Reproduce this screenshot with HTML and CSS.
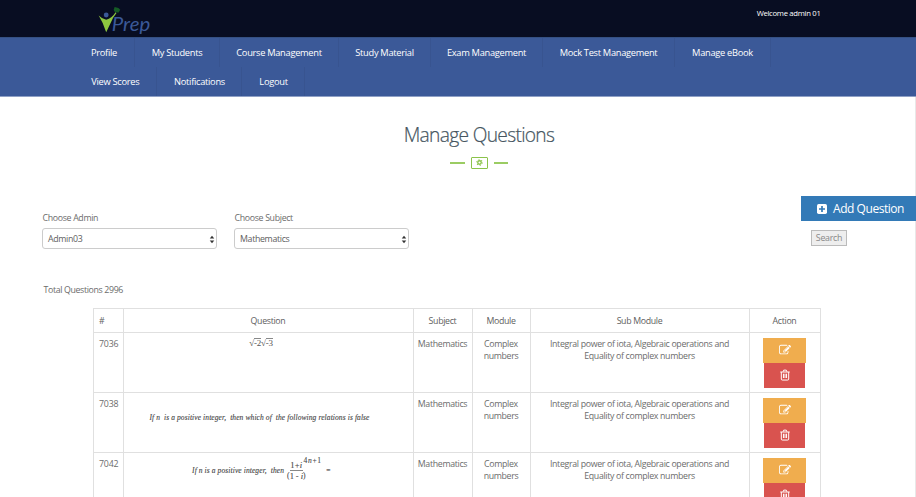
FILE: index.html
```html
<!DOCTYPE html>
<html lang="en">
<head>
<meta charset="utf-8">
<title>Manage Questions</title>
<link rel="stylesheet" href="styles.css">
</head>
<body>
<svg class="sprite" aria-hidden="true">
  <symbol id="edit" viewBox="0 0 1792 1792"><path d="M888 1184l116-116-152-152-116 116v56h96v96h56zm440-720q-16-16-33 1l-350 350q-17 17-1 33t33-1l350-350q17-17 1-33zm80 594v190q0 119-84.500 203.500t-203.500 84.500h-832q-119 0-203.500-84.500t-84.500-203.500v-832q0-119 84.500-203.500t203.500-84.500h832q63 0 117 25 15 7 18 23 3 17-9 29l-49 49q-14 14-32 8-23-6-45-6h-832q-66 0-113 47t-47 113v832q0 66 47 113t113 47h832q66 0 113-47t47-113v-126q0-13 9-22l64-64q15-15 35-7t20 29zm-96-738l288 288-672 672h-288v-288zm444 132l-92 92-288-288 92-92q28-28 68-28t68 28l152 152q28 28 28 68t-28 68z"/></symbol>
  <symbol id="trash" viewBox="0 0 14 14"><path d="M1.500 3.500h11M4.800 3.200l.7-1.900h3l.7 1.900M2.700 3.500v8.200q0 1.200 1.200 1.200h6.200q1.200 0 1.200-1.200V3.500M5.200 5.500v5M7 5.500v5M8.800 5.500v5" fill="none" stroke="currentColor" stroke-width="1.150"/></symbol>
</svg>
<header class="top">
  <svg class="logo" viewBox="0 0 54 32" role="img" aria-label="Prep">
    <path d="M0 9q4 4 8 4.500 6-1.500 10-8l1 1q-4 5-6 10L8 27Q5 17 0 9z" fill="#8dc63f"/>
    <circle cx="8" cy="8.500" r="2.600" fill="#3b5998"/>
    <path d="M16 3l1-3 4 1 2 2-2 3-4-1z" fill="#155b25"/>
    <text x="14" y="26" textLength="41" lengthAdjust="spacingAndGlyphs" class="logo-text">Prep</text>
  </svg>
  <span class="welcome">Welcome admin 01</span>
</header>
<nav class="nav">
  <div class="nav-row"><a class="w-a">Profile</a><a class="w-b">My Students</a><a class="w-c">Course Management</a><a class="w-d">Study Material</a><a class="w-e">Exam Management</a><a class="w-f">Mock Test Management</a><a class="w-g">Manage eBook</a></div>
  <div class="nav-row"><a class="w-h">View Scores</a><a class="w-b">Notifications</a><a class="w-i">Logout</a></div>
</nav>
<main class="main">
  <h1>Manage Questions</h1>
  <div class="divider"><i></i><b><svg viewBox="0 0 8 8"><circle cx="4" cy="4" r="2" fill="none" stroke="#8bc34a" stroke-width="1.500"/><circle cx="4" cy="4" r="3.100" fill="none" stroke="#8bc34a" stroke-width="1.300" stroke-dasharray="1.300 1.950"/></svg></b><i></i></div>
  <section class="controls">
    <div class="field"><label>Choose Admin</label><div class="select">Admin03<svg viewBox="0 0 6 10"><path d="M.5 4L3 .7 5.500 4zM.5 6L3 9.300 5.500 6z"/></svg></div></div>
    <div class="field"><label>Choose Subject</label><div class="select">Mathematics<svg viewBox="0 0 6 10"><path d="M.5 4L3 .7 5.500 4zM.5 6L3 9.300 5.500 6z"/></svg></div></div>
    <div class="actions">
      <a class="add"><svg viewBox="0 0 10 10"><rect width="10" height="10" rx="1.700" fill="#fff"/><path d="M5 2v6M2 5h6" stroke="#337ab7" stroke-width="1.700"/></svg><span>Add Question</span></a>
      <button class="search">Search</button>
    </div>
  </section>
  <p class="total">Total Questions 2996</p>
  <table class="table">
    <colgroup><col class="c-id"><col class="c-question"><col class="c-subject"><col class="c-module"><col class="c-sub"><col class="c-action"></colgroup>
    <thead><tr><th class="left">#</th><th>Question</th><th>Subject</th><th>Module</th><th>Sub Module</th><th>Action</th></tr></thead>
    <tbody>
      <tr><td class="left">7036</td><td><div class="root">√<span>-2</span>√<span>-3</span></div></td><td>Mathematics</td><td>Complex<br>numbers</td><td>Integral power of iota, Algebraic operations and<br>Equality of complex numbers</td><td class="act"><a class="btn edit"><svg><use href="#edit"/></svg></a><a class="btn del"><svg><use href="#trash"/></svg></a></td></tr>
      <tr><td class="left">7038</td><td><div class="math relation">If n  is a positive integer,  then which of  the following relations is false</div></td><td>Mathematics</td><td>Complex<br>numbers</td><td>Integral power of iota, Algebraic operations and<br>Equality of complex numbers</td><td class="act"><a class="btn edit"><svg><use href="#edit"/></svg></a><a class="btn del"><svg><use href="#trash"/></svg></a></td></tr>
      <tr><td class="left">7042</td><td><div class="math power"><span class="lead">If n is a positive integer,  then</span><span class="paren">(</span><span class="frac"><span>1+<em>i</em></span><span>1 - <em>i</em></span></span><span class="paren">)</span><span class="exp">4<em>n</em>+1</span><span class="eq">=</span></div></td><td>Mathematics</td><td>Complex<br>numbers</td><td>Integral power of iota, Algebraic operations and<br>Equality of complex numbers</td><td class="act"><a class="btn edit"><svg><use href="#edit"/></svg></a><a class="btn del"><svg><use href="#trash"/></svg></a></td></tr>
    </tbody>
  </table>
</main>
</body>
</html>
```
FILE: styles.css
```css
* { box-sizing: border-box; }
body { margin: 0; height: 497px; overflow: hidden; background: #fff; color: #6c6c6c; font: 8.8px/12.500px "Open Sans", "Noto Sans", sans-serif; letter-spacing: -0.33px; }
.sprite { display: none; }
.top { height: 37px; background: #080d22; display: flex; justify-content: space-between; padding: 7px 95.500px 0 97px; color: #fff; }
.logo { width: 54px; height: 30px; overflow: visible; }
.logo-text { font: italic 20px Lato, sans-serif; fill: #3b5998; letter-spacing: 0; }
.welcome { font-size: 7.7px; line-height: 12px; letter-spacing: -0.3px; }
.nav { height: 60px; background: #3b5998; border-top: 1px solid #355083; border-bottom: 1px solid #8fa0c5; padding-left: 73.500px; }
.nav-row { display: flex; height: 29px; }
.nav-row a { border-right: 1px solid #385490; color: #fff; font-size: 9.300px; letter-spacing: -0.3px; line-height: 30px; padding-left: 1px; text-align: center; white-space: nowrap; }
.w-a { width: 61px; }
.w-b { width: 85px; }
.w-c { width: 119px; }
.w-d { width: 92px; }
.w-e { width: 112px; }
.w-f { width: 132px; }
.w-g { width: 96px; }
.w-h { width: 83.500px; }
.w-i { width: 63px; }
.main { height: 400px; border-right: 1px solid #e8e8e8; }
h1 { margin: 0; padding: 25px 0 0 43px; height: 59px; color: #455560; font-size: 19.200px; line-height: 26px; font-weight: 350; text-align: center; letter-spacing: -0.68px; -webkit-text-stroke: 0.2px #455560; }
.divider { display: flex; justify-content: center; align-items: center; gap: 6px; height: 13px; padding-left: 43px; }
.divider i { width: 14.500px; height: 2px; background: #9bcc63; }
.divider b { width: 17px; height: 12px; border: 1px solid #8bc34a; border-radius: 1px; display: flex; align-items: center; justify-content: center; }
.divider svg { width: 7px; height: 7px; }
.controls { display: flex; gap: 17px; padding: 27px 0 0 42px; height: 114px; }
.field { width: 175px; padding-top: 17px; }
.field label { display: block; height: 15px; line-height: 11.500px; padding-left: .5px; }
.select { height: 21px; border: 1px solid #ccc; border-radius: 3px; padding: 1px 1.500px 0 5px; display: flex; justify-content: space-between; align-items: center; color: #606060; }
.select svg { width: 6px; height: 9px; fill: #333; }
.actions { margin-left: auto; width: 114px; }
.add { width: 115px; height: 25px; background: #337ab7; color: #fff; display: flex; align-items: center; gap: 6px; padding: 1px 0 0 16px; font-size: 12px; letter-spacing: -0.45px; white-space: nowrap; }
.add svg { width: 10px; height: 10px; flex: none; }
.search { display: block; margin: 9px 0 0 10px; width: 36px; height: 16px; padding: 0; background: #eee; border: 1px solid #bbb; color: #888; font: inherit; letter-spacing: -0.25px; }
.total { margin: 0; padding: 1px 0 0 43.500px; height: 25px; letter-spacing: -0.36px; }
.table { width: 727px; margin-left: 93px; border-collapse: collapse; table-layout: fixed; }
.c-id { width: 29.500px; }
.c-question { width: 290px; }
.c-subject { width: 59px; }
.c-module { width: 58px; }
.c-sub { width: 219px; }
.c-action { width: 71px; }
th, td { border: 1px solid #e0e0e0; padding: 0; text-align: center; white-space: nowrap; }
th { height: 23.500px; padding-top: 1px; border-bottom-width: 1.500px; font-weight: 400; color: #606060; }
td { height: 60.200px; padding-top: 5px; vertical-align: top; }
.left { text-align: left; padding-left: 5px; letter-spacing: -0.2px; }
.btn { display: flex; align-items: center; justify-content: center; height: 25px; margin: 0 auto; color: #fff; fill: #fff; }
.btn svg { width: 12px; height: 12px; }
.edit { width: 43px; background: #f0ad4e; }
.del { width: 41px; background: #d9534f; }
.math { font: italic 7.5px/12px "Liberation Serif", serif; white-space: pre; color: #444; letter-spacing: 0.1px; padding-right: 17px; -webkit-text-stroke: 0.1px #444; }
.relation { padding-top: 14px; }
.root { font: 9px/11px "Liberation Serif", serif; color: #555; letter-spacing: -0.2px; padding-right: 14px; }
.root span { display: inline-block; line-height: 8px; border-top: 1px solid #888; }
.power { display: flex; justify-content: center; align-items: center; height: 26px; padding-right: 13px; }
.lead { padding-right: 3px; }
.frac { display: flex; flex-direction: column; font: 8.500px/10px "Liberation Serif", serif; }
.frac span { text-align: center; letter-spacing: -.1px; }
.frac span:first-child { border-bottom: 1px solid #888; letter-spacing: .3px; }
.paren { font-style: normal; padding-top: 10px; }
.exp { align-self: flex-start; margin: -3px 0 0 -2px; font-style: normal; letter-spacing: .7px; }
.eq { padding-left: 4px; }
```
